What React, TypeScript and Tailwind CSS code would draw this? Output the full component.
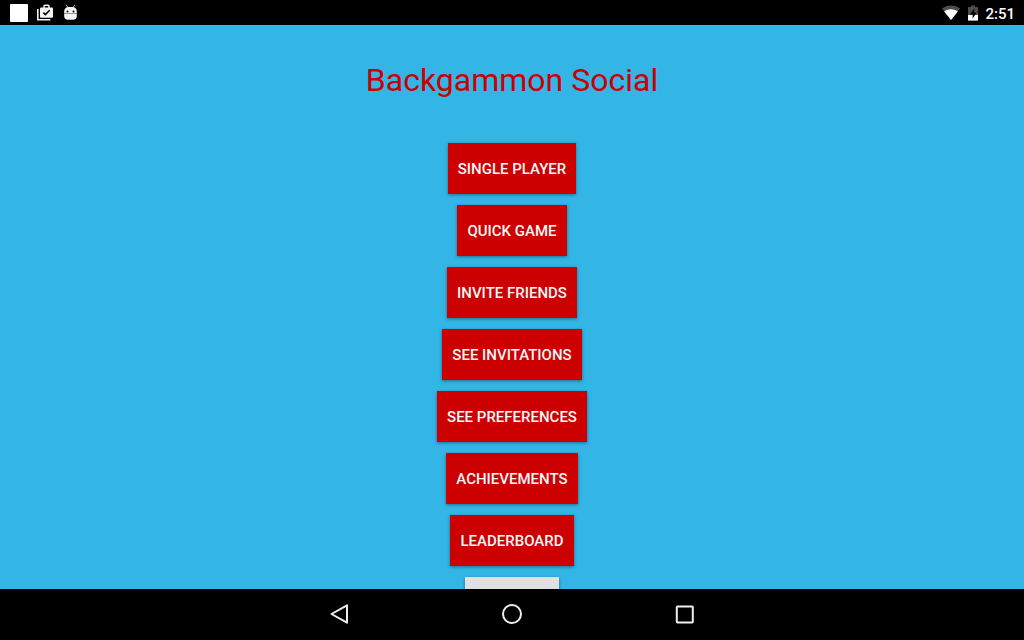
import React from "react";

interface MenuButtonProps {
  label: string;
}

const menuItems: string[] = [
  "Single Player",
  "Quick Game",
  "Invite Friends",
  "See Invitations",
  "See Preferences",
  "Achievements",
  "Leaderboard",
];

const MenuButton = ({ label }: MenuButtonProps) => (
  <button
    type="button"
    className="h-[51px] shrink-0 bg-[#cc0000] px-2.5 pt-0.5 text-[15px] font-medium uppercase text-[#f7f7f7] shadow-[0_1px_3px_rgba(0,0,0,0.4)]"
  >
    {label}
  </button>
);

const StatusBar = () => (
  <header className="flex h-[25px] shrink-0 items-center justify-between bg-black pl-2.5 pr-[9px] text-white">
    <div className="flex items-center">
      <div className="size-[18px] rounded-[1px] bg-white" />
      {/* play store updates */}
      <svg className="ml-2 size-[18px]" viewBox="0 0 18 18" fill="none">
        <path d="M1.8 5v10.7h12.5" stroke="#f5f5f5" strokeWidth="1.6" />
        <path
          d="M8 4V2.2c0-.6.4-1 1-1h3c.6 0 1 .4 1 1V4"
          stroke="#f5f5f5"
          strokeWidth="1.5"
        />
        <rect x="4" y="3.4" width="13" height="10.4" rx="1" fill="#f5f5f5" />
        <path d="m7.4 8.6 2 2 4.2-4.4" stroke="#000" strokeWidth="1.6" />
      </svg>
      {/* android debug head */}
      <svg className="ml-2 size-[18px]" viewBox="0 0 18 18">
        <path
          d="M4.2.8 6 3.6M12.8.8 11 3.6"
          stroke="#bbb"
          strokeWidth="1"
        />
        <path
          d="M2.2 9.4V7.4c0-2.6 1.8-4.4 4.4-4.4h3.8c2.6 0 4.4 1.8 4.4 4.4v2z"
          fill="#f5f5f5"
        />
        <path
          d="M2.2 9.8h12.6v2.4c0 2.2-1.4 3.6-3.6 3.6H5.8c-2.2 0-3.6-1.4-3.6-3.6z"
          fill="#f5f5f5"
        />
        <circle cx="5.5" cy="7.4" r="1" fill="#000" />
        <circle cx="11.5" cy="7.4" r="1" fill="#000" />
      </svg>
    </div>
    <div className="flex items-center">
      <svg className="h-4 w-[18px]" viewBox="0 0 18 16">
        <path d="M0 3.6C5.2-.4 12.8-.4 18 3.6L9 15z" fill="#4d4d4d" />
        <path d="M2.2 6.4C6.2 3.6 11.8 3.6 15.8 6.4L9 15z" fill="#fff" />
      </svg>
      <svg className="ml-[7px] h-4 w-3" viewBox="0 0 12 16">
        <path d="M1 2h3V.4h4V2h3v8H1z" fill="#4d4d4d" />
        <path d="M1 10h10v5.6H1z" fill="#fff" />
        <path d="M7.4 3.6 2.8 9.4h2.8v4l4.2-5.8H7.2z" fill="#000" />
      </svg>
      <time className="ml-1.5 pt-0.5 text-[15px] font-medium leading-5">
        2:51
      </time>
    </div>
  </header>
);

const NavigationBar = () => (
  <nav className="flex h-[51px] shrink-0 items-center justify-center gap-[148px] bg-black pb-px">
    <button type="button" aria-label="Back">
      <svg className="size-6" viewBox="0 0 24 24" fill="none">
        <path
          d="M19 3.3v17.4L3.5 12z"
          stroke="#eee"
          strokeWidth="2"
          strokeLinejoin="round"
        />
      </svg>
    </button>
    <button type="button" aria-label="Home">
      <svg className="size-6" viewBox="0 0 24 24" fill="none">
        <circle cx="12" cy="12" r="9" stroke="#eee" strokeWidth="2" />
      </svg>
    </button>
    <button type="button" aria-label="Recent apps">
      <svg className="size-6" viewBox="0 0 24 24" fill="none">
        <rect
          x="4.8"
          y="4.4"
          width="16"
          height="16"
          rx=".6"
          stroke="#eee"
          strokeWidth="2"
        />
      </svg>
    </button>
  </nav>
);

const App = () => {
  return (
    <div className="flex h-screen flex-col bg-[#33b5e5] font-['Roboto',sans-serif]">
      <StatusBar />
      <main className="flex min-h-0 flex-1 flex-col items-center overflow-hidden">
        <h1 className="mt-[35px] shrink-0 text-[32px] leading-10 text-[#cc0000]">
          Backgammon Social
        </h1>
        <div className="mt-[43px] flex flex-col items-center gap-[11px]">
          {menuItems.map((item) => (
            <MenuButton key={item} label={item} />
          ))}
          <button
            type="button"
            aria-label="Sign out"
            className="h-[51px] w-[94px] shrink-0 bg-[#e0e0e0] shadow-[0_1px_3px_rgba(0,0,0,0.4)]"
          />
        </div>
      </main>
      <NavigationBar />
    </div>
  );
};

export default App;
